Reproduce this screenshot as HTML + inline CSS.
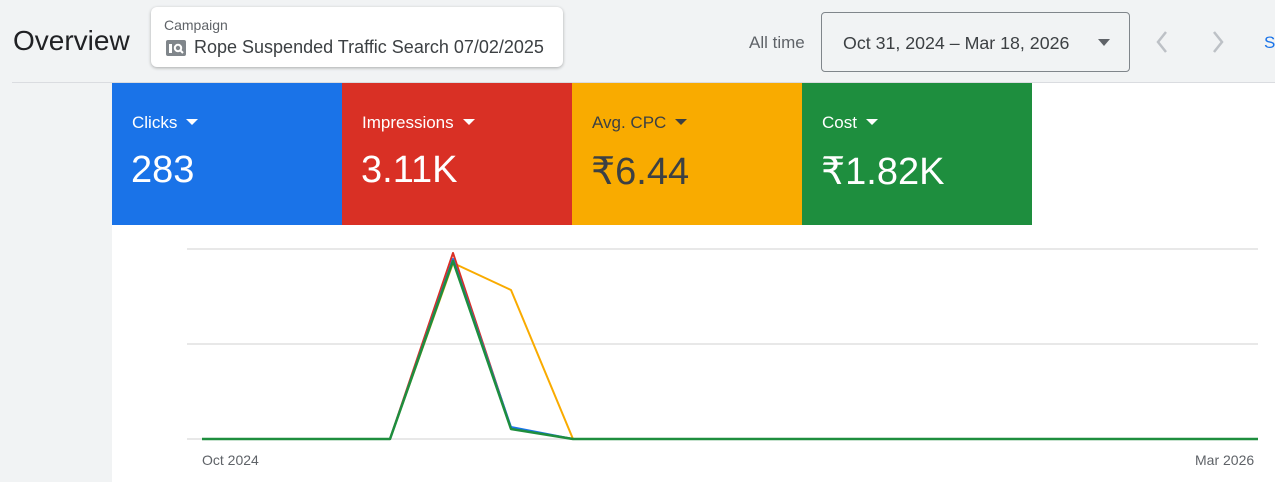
<!DOCTYPE html>
<html><head><meta charset="utf-8"><style>
*{margin:0;padding:0;box-sizing:border-box}
body{width:1275px;height:482px;overflow:hidden;background:#f1f3f4;font-family:"Liberation Sans",Arial,sans-serif;position:relative;color:#202124}
.abs{position:absolute}
.title{left:13px;top:25px;font-size:28px;color:#202124}
.camp{left:151px;top:7px;width:412px;height:60px;background:#fff;border-radius:6px;box-shadow:0 1px 3px rgba(0,0,0,.3)}
.camp .l{position:absolute;left:13px;top:10px;font-size:14px;color:#5f6368}
.camp .n{position:absolute;left:43px;top:30px;font-size:18px;color:#3c4043}
.camp .ic{position:absolute;left:15px;top:33px;width:20px;height:16px}
.alltime{left:749px;top:33px;font-size:17px;color:#5f6368}
.date{left:821px;top:12px;width:309px;height:60px;border:1px solid #80868b;border-radius:4px}
.date span{position:absolute;left:21px;top:20px;font-size:17.8px;color:#3c4043}
.date i{position:absolute;left:276px;top:26px;border-left:6px solid transparent;border-right:6px solid transparent;border-top:7px solid #5f6368}
.hline{left:12px;top:82px;width:1263px;height:1px;background:#dadce0}
.main{left:112px;top:83px;width:1163px;height:399px;background:#fff}
.tile{top:83px;width:230px;height:142px;color:#fff}
.tile .l{position:absolute;left:20px;top:30px;font-size:17px}
.tile .l:after{content:"";display:inline-block;margin-left:9px;vertical-align:3px;border-left:6px solid transparent;border-right:6px solid transparent;border-top:6px solid currentColor}
.tile .v{position:absolute;left:19px;top:66px;font-size:38px}
.ax{top:452px;font-size:14px;color:#5f6368}
</style></head><body>
<div class="abs title">Overview</div>
<div class="abs camp"><div class="l">Campaign</div>
<svg class="ic" viewBox="0 0 20 16"><rect x="0" y="0" width="20" height="16" rx="2" fill="#80868b"/><rect x="3" y="4" width="3" height="9" fill="#fff"/><circle cx="12" cy="8" r="3.2" fill="none" stroke="#fff" stroke-width="2"/><path d="M14 10 L17 13" stroke="#fff" stroke-width="2"/></svg>
<div class="n">Rope Suspended Traffic Search 07/02/2025</div></div>
<div class="abs alltime">All time</div>
<div class="abs date"><span>Oct 31, 2024 – Mar 18, 2026</span><i></i></div>
<svg class="abs" style="left:1150px;top:28px" width="90" height="28"><path d="M16 4 L8 14 L16 24" stroke="#bdc1c6" stroke-width="2.5" fill="none"/><path d="M64 4 L72 14 L64 24" stroke="#bdc1c6" stroke-width="2.5" fill="none"/></svg>
<div class="abs" style="left:1264px;top:33px;font-size:17px;color:#1a73e8">S</div>
<div class="abs hline"></div>
<div class="abs main"></div>
<div class="abs tile" style="left:112px;background:#1a73e8"><div class="l">Clicks</div><div class="v">283</div></div>
<div class="abs tile" style="left:342px;background:#d93025"><div class="l">Impressions</div><div class="v">3.11K</div></div>
<div class="abs tile" style="left:572px;background:#f9ab00;color:#3c4043"><div class="l">Avg. CPC</div><div class="v">₹6.44</div></div>
<div class="abs tile" style="left:802px;background:#1e8e3e"><div class="l">Cost</div><div class="v">₹1.82K</div></div>
<svg class="abs" style="left:0;top:0" width="1275" height="482">
<g stroke="#e0e0e0" stroke-width="1.5"><line x1="187" y1="249" x2="1258" y2="249"/><line x1="187" y1="344" x2="1258" y2="344"/><line x1="187" y1="439" x2="1258" y2="439"/></g>
<g fill="none" stroke-width="2" stroke-linejoin="round">
<polyline stroke="#f9ab00" points="202,439 390,439 453,263 511,290 573,439 1258,439"/>
<polyline stroke="#d93025" points="202,439 390,439 453,253 511,428 573,439 1258,439"/>
<polyline stroke="#1a73e8" points="202,439 390,439 453,259 511,427 573,439 1258,439"/>
<polyline stroke="#1e8e3e" stroke-width="2.5" points="202,439 390,439 453,261 511,429 573,439 1258,439"/>
</g></svg>
<div class="abs ax" style="left:202px">Oct 2024</div>
<div class="abs ax" style="left:1195px">Mar 2026</div>
</body></html>
